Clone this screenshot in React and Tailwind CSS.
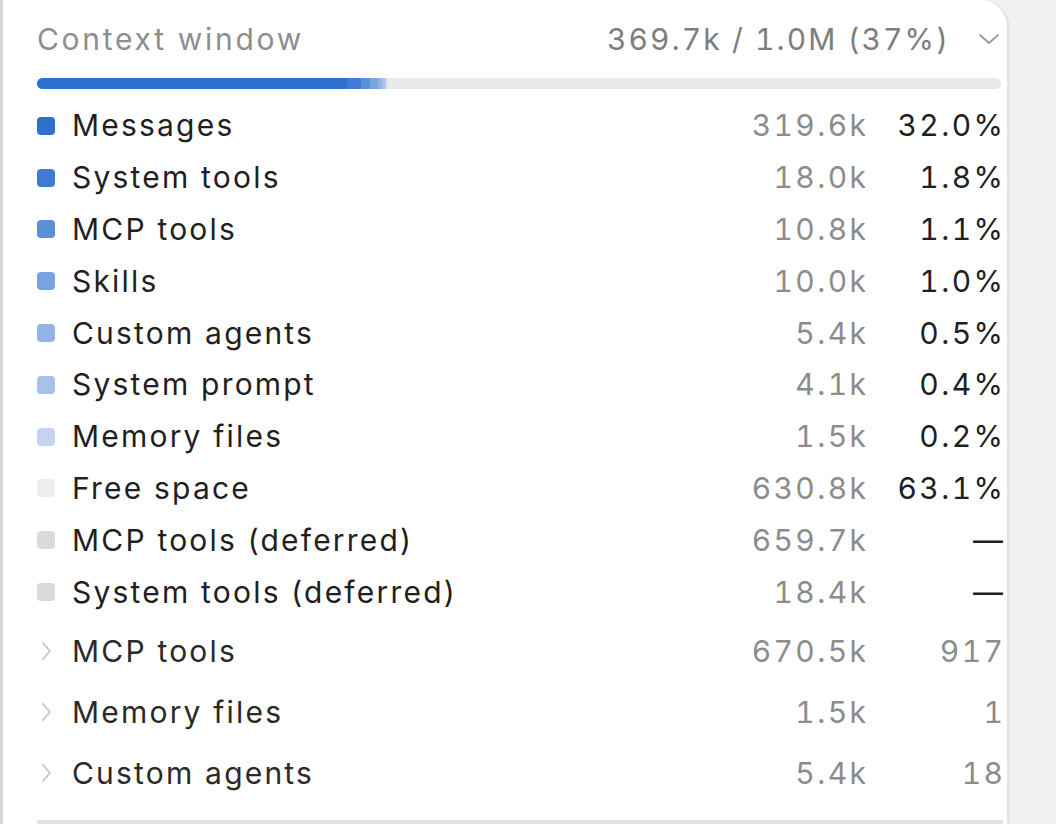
import React from "react";

const rows = [
  { label: "Messages", tokens: "319.6k", pct: "32.0%", color: "bg-[#2f6fcf]" },
  { label: "System tools", tokens: "18.0k", pct: "1.8%", color: "bg-[#3f7bd2]" },
  { label: "MCP tools", tokens: "10.8k", pct: "1.1%", color: "bg-[#5b8fd8]" },
  { label: "Skills", tokens: "10.0k", pct: "1.0%", color: "bg-[#79a3df]" },
  { label: "Custom agents", tokens: "5.4k", pct: "0.5%", color: "bg-[#93b3e6]" },
  { label: "System prompt", tokens: "4.1k", pct: "0.4%", color: "bg-[#a7c1ea]" },
  { label: "Memory files", tokens: "1.5k", pct: "0.2%", color: "bg-[#c4d4f0]" },
  { label: "Free space", tokens: "630.8k", pct: "63.1%", color: "bg-[#eeeeee]" },
  { label: "MCP tools (deferred)", tokens: "659.7k", pct: "—", color: "bg-[#dadada]" },
  { label: "System tools (deferred)", tokens: "18.4k", pct: "—", color: "bg-[#dadada]" },
];

const groups = [
  { label: "MCP tools", tokens: "670.5k", count: "917" },
  { label: "Memory files", tokens: "1.5k", count: "1" },
  { label: "Custom agents", tokens: "5.4k", count: "18" },
];

function ChevronDown() {
  return (
    <svg width="22" height="14" viewBox="0 0 22 14" fill="none">
      <path d="M2 3 L11 11 L20 3" stroke="#9a9a9a" strokeWidth="1.8" strokeLinecap="round" strokeLinejoin="round" />
    </svg>
  );
}

function ChevronRight() {
  return (
    <svg width="12" height="22" viewBox="0 0 12 22" fill="none">
      <path d="M3 3 L10 11 L3 19" stroke="#c4c4c4" strokeWidth="1.8" strokeLinecap="round" strokeLinejoin="round" />
    </svg>
  );
}

export default function App() {
  return (
    <div
      className="w-[1056px] h-[824px] overflow-hidden bg-[#f1f1f1] flex"
      style={{ fontFamily: "Inter, 'Noto Sans', sans-serif" }}
    >
      <div className="w-[1010px] h-[840px] bg-white border-l-[3px] border-l-[#d6d6d6] border-r-[3px] border-r-[#e4e4e4] rounded-tr-[28px] pl-[34px] pr-[7px] flex flex-col">
        <div className="h-[78px] flex flex-col">
          <div className="h-[60px] pt-[18px] flex items-center justify-between">
            <span className="text-[30px] text-[#8e8e8e] tracking-[2.7px]">Context window</span>
            <div className="flex items-center gap-[30px]">
              <span className="text-[30px] text-[#7d7d7d] tabular-nums tracking-[2.1px] mr-[-2px]">369.7k / 1.0M (37%)</span>
              <ChevronDown />
            </div>
          </div>
        </div>
        <div className="h-[11px] w-[964px] rounded-full bg-[#e9e9e9] overflow-hidden flex">
          <div className="h-full w-[310px] bg-[#2f6fcf]" />
          <div className="h-full w-[14px] bg-[#3f7bd2]" />
          <div className="h-full w-[9px] bg-[#5b8fd8]" />
          <div className="h-full w-[8px] bg-[#79a3df]" />
          <div className="h-full w-[4px] bg-[#93b3e6]" />
          <div className="h-full w-[3px] bg-[#a7c1ea]" />
          <div className="h-full w-[2px] bg-[#c4d4f0]" />
        </div>
        <div className="mt-[11px] flex flex-col w-[966px]">
          {rows.map((r) => (
            <div key={r.label} className="h-[51.8px] flex items-center">
              <div className={`w-[18px] h-[18px] rounded-[4px] ${r.color}`} />
              <span className="ml-[17px] flex-1 text-[30px] text-[#1f1f1f] tracking-[2.2px]">{r.label}</span>
              <span className="w-[200px] text-right text-[30px] text-[#8c8c8c] tabular-nums tracking-[2.4px] mr-[-2.4px]">{r.tokens}</span>
              <span className="w-[139.4px] text-right text-[30px] text-[#1f1f1f] tabular-nums tracking-[2.4px] mr-[-2.4px]">{r.pct}</span>
            </div>
          ))}
          <div className="h-[3px]" />
          {groups.map((g) => (
            <div key={g.label} className="h-[61px] flex items-center">
              <div className="w-[18px] flex justify-center">
                <ChevronRight />
              </div>
              <span className="ml-[17px] flex-1 text-[30px] text-[#2a2a2a] tracking-[2.2px]">{g.label}</span>
              <span className="w-[200px] text-right text-[30px] text-[#8c8c8c] tabular-nums tracking-[2.4px] mr-[-2.4px]">{g.tokens}</span>
              <span className="w-[139.4px] text-right text-[30px] text-[#8c8c8c] tabular-nums tracking-[2.4px] mr-[-2.4px]">{g.count}</span>
            </div>
          ))}
          <div className="mt-[16px] h-[6px] w-[966px] bg-[#e3e3e3]" />
        </div>
      </div>
    </div>
  );
}
